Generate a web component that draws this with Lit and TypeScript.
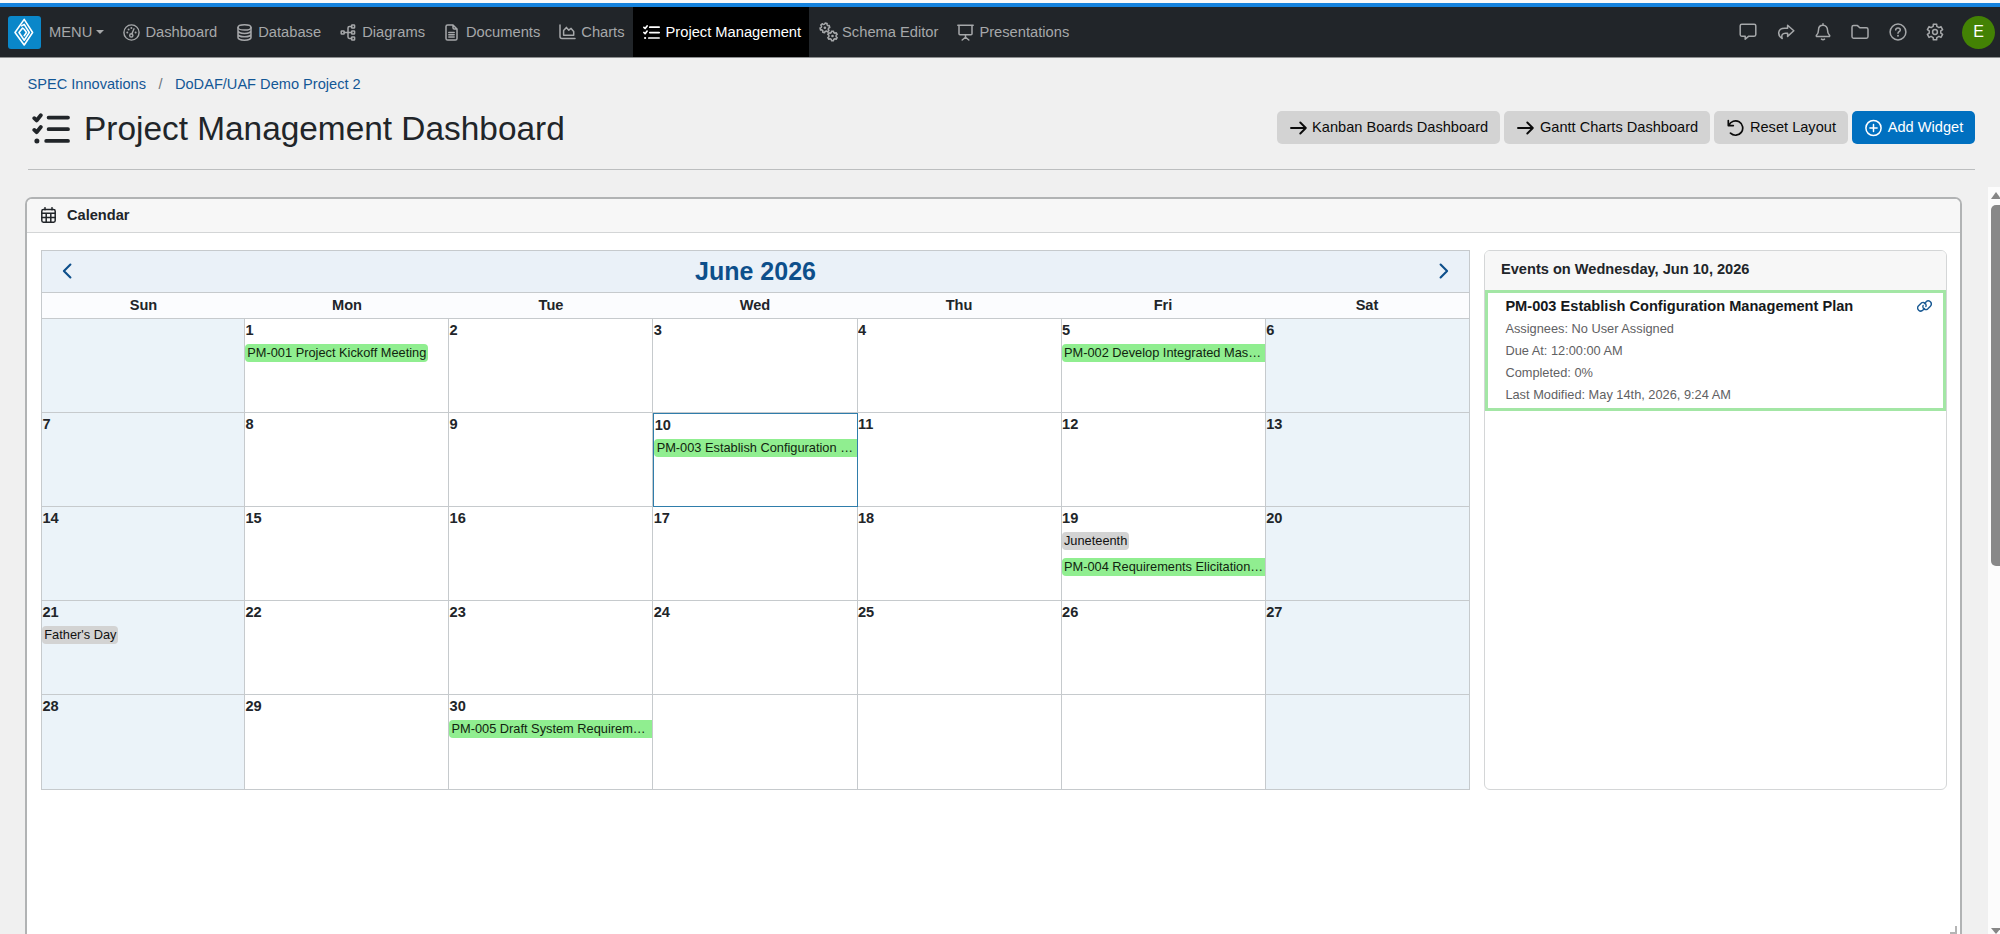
import { LitElement, html, css, svg, TemplateResult, nothing } from "lit";
import { customElement, property } from "lit/decorators.js";
import { classMap } from "lit/directives/class-map.js";

/** Outline of a toothed wheel centred on (cx, cy). */
function gearPath(cx: number, cy: number, outer: number, inner: number, teeth: number, turn = 0): string {
  const step = 360 / teeth;
  const at = (deg: number, r: number) => {
    const a = ((deg - 90 + turn) * Math.PI) / 180;
    return `${(cx + r * Math.cos(a)).toFixed(2)} ${(cy + r * Math.sin(a)).toFixed(2)}`;
  };
  const pts: string[] = [];
  for (let k = 0; k < teeth; k++) {
    const c = k * step;
    pts.push(at(c - step * 0.3, inner), at(c - step * 0.2, outer), at(c + step * 0.2, outer), at(c + step * 0.3, inner));
  }
  return `M${pts.join("L")}Z`;
}

interface Glyph {
  w: number;
  h: number;
  sw: number;
  body: TemplateResult;
}

const GLYPHS: Record<string, Glyph> = {
  gauge: { w: 17, h: 17, sw: 1.4, body: svg`
    <circle cx="8.5" cy="8.5" r="7.6"/><circle cx="8.3" cy="11.4" r="1.6"/><path d="M8.9 9.8 11 4.8"/>
    <g class="dot"><circle cx="4.3" cy="8.6" r="1"/><circle cx="5.6" cy="5.4" r="1"/><circle cx="8.4" cy="4.1" r="1"/><circle cx="12.6" cy="8.6" r="1"/></g>` },
  database: { w: 15, h: 17, sw: 1.5, body: svg`
    <ellipse cx="7.5" cy="3.4" rx="6.5" ry="2.6"/><path d="M1 3.4v10.200c0 1.400 2.900 2.600 6.500 2.600s6.500-1.200 6.500-2.600V3.400M1 6.800c0 1.400 2.900 2.600 6.500 2.600S14 8.200 14 6.800M1 10.200c0 1.400 2.900 2.600 6.500 2.600s6.500-1.200 6.500-2.600"/>` },
  diagram: { w: 16, h: 17, sw: 1.5, body: svg`
    <rect x="1.2" y="7" width="3" height="3" rx=".6"/><rect x="11.6" y="1" width="3" height="3" rx=".6"/><rect x="11.6" y="7" width="3" height="3" rx=".6"/><rect x="11.6" y="13" width="3" height="3" rx=".6"/>
    <path d="M4.2 8.5h7.4M11.6 2.5H9.4q-1.4 0-1.4 1.4v9.2q0 1.4 1.4 1.4h2.2"/>` },
  document: { w: 13, h: 17, sw: 1.5, body: svg`
    <path d="M8 1H2.6Q1 1 1 2.6v11.8Q1 16 2.6 16h7.8q1.6 0 1.6-1.6V5zM8 1v2.8Q8 5 9.2 5H12M3.8 8.4h5.4M3.8 10.8h5.4M3.8 13.1h5.4"/>` },
  area: { w: 17, h: 16, sw: 1.5, body: svg`
    <path d="M1 1v11.6Q1 14.6 3 14.6h13M4.6 11.2V6.6L7.4 3.4l2.4 2.8 2.3-1.8 2.6 3v3.8z"/>` },
  tasks: { w: 17, h: 15, sw: 1.7, body: svg`
    <path d="M6.8 2.2h9.4M6.8 7.6h9.4M5.800 13h10.400M.9 2.3l1.2 1.2L4.1.9M.9 7.5l1.2 1.2 2-2.6"/><circle class="dot" cx="2.1" cy="13" r="1.1"/>` },
  gears: { w: 19, h: 20, sw: 1.5, body: svg`
    <path d=${gearPath(5.9, 5.800, 4.900, 3.700, 6, 15)} /><circle class="dot" cx="5.9" cy="5.8" r="1.3"/>
    <path d=${gearPath(13.5, 14, 4.900, 3.700, 6)} /><circle class="dot" cx="13.5" cy="14" r="1.3"/>` },
  board: { w: 17, h: 17, sw: 1.5, body: svg`
    <path d="M.8 1.2h15.400M2 1.200v8.600q0 1 1 1h11q1 0 1-1V1.200M8.500 10.800v2.400M5.200 16l3.300-2.800 3.300 2.800"/>` },
  comment: { w: 18, h: 18, sw: 1.5, body: svg`
    <path d="M2.8 1.2h12.4q1.6 0 1.6 1.6v8.8q0 1.6-1.6 1.6H9.8l-3.6 3v-3H2.8q-1.6 0-1.6-1.6V2.8q0-1.6 1.6-1.6z"/>` },
  share: { w: 18, h: 18, sw: 1.5, body: svg`
    <path d="M10.6 2.2 16.8 7.8l-6.2 5.6v-3.1H8.4c-3 0-4.3 2-3.2 5.2C.2 12.400 .2 5.400 7.600 5.300h3z"/>` },
  bell: { w: 16, h: 18, sw: 1.5, body: svg`
    <path d="M8 .8v1.500M8 2.300c-2.900 0-4.500 2.100-4.500 4.700 0 3-.8 4-2 5.200-.5.600-.1 1.300.5 1.300h12c.6 0 1-.7.5-1.300-1.200-1.200-2-2.200-2-5.200 0-2.600-1.600-4.700-4.500-4.700zM6.500 16.100q1.500 1.200 3 0"/>` },
  folder: { w: 18, h: 16, sw: 1.5, body: svg`
    <path d="M2.600 1.600h3.900l2.300 2.200h6.600q1.600 0 1.600 1.600v7.200q0 1.600-1.600 1.600H2.600q-1.600 0-1.600-1.600V3.200q0-1.600 1.600-1.600z"/>` },
  help: { w: 18, h: 18, sw: 1.5, body: svg`
    <circle cx="9" cy="9" r="7.900"/><path d="M6.700 6.900c.1-1.400 1-2 2.300-2 1.400 0 2.300.8 2.300 2 0 1.700-2.300 1.700-2.300 3.300"/><circle class="dot" cx="9" cy="12.700" r=".95"/>` },
  gear: { w: 18, h: 18, sw: 1.5, body: svg`
    <path d=${gearPath(9, 9, 8, 5.9, 6)} /><circle cx="9" cy="9" r="2.400"/>` },
  titleTasks: { w: 38, h: 31, sw: 3.8, body: svg`
    <path d="M16.600 4.600H36M16.600 16.200H36M14.200 27.900H36"/><path d="M2.300 5.200 4.600 7.500 8.800 2.300M2.300 16.900l2.300 2.300 4.200-5.200"/><circle class="dot" cx="4.900" cy="27.900" r="2.500"/>` },
  arrow: { w: 17, h: 14, sw: 1.900, body: svg`<path d="M1 7h14.500M10.300 1.500 15.800 7l-5.500 5.500"/>` },
  reset: { w: 17, h: 18, sw: 1.700, body: svg`<path d="M1.300 1.600v5h5M1.900 6.200A7.200 7.200 0 1 1 3.500 14.200"/>` },
  plus: { w: 17, h: 18, sw: 1.500, body: svg`<circle cx="8.500" cy="9" r="7.600"/><path d="M8.500 5.400v7.200M4.900 9h7.200"/>` },
  calendar: { w: 15, h: 16, sw: 1.500, body: svg`
    <rect x=".8" y="2.600" width="13.400" height="12.600" rx="1.600"/><path d="M4 .7v2M11 .7v2M.8 6.200h13.400M.8 10.500h13.400M5.200 6.200v9M9.800 6.200v9"/>` },
  left: { w: 10, h: 16, sw: 2.100, body: svg`<path d="M8.400 1.500 1.900 8l6.500 6.500"/>` },
  right: { w: 10, h: 16, sw: 2.100, body: svg`<path d="M1.600 1.500 8.100 8l-6.500 6.500"/>` },
  link: { w: 15, h: 12, sw: 1.400, body: svg`
    <path d="M7.600 8.400 6 10.100A3.050 3.050 0 0 1 1.600 5.800L4.400 2.900A3.050 3.050 0 0 1 8.900 6.500M7.400 3.600 9 1.900A3.050 3.050 0 0 1 13.400 6.200L10.600 9.100A3.050 3.050 0 0 1 6.100 5.500"/>` },
  logo: { w: 33, h: 33, sw: 1.600, body: svg`
    <path d="M16.200 3.400 24.600 16.500 16.200 29 7 16.500z"/><path d="M13.600 9.900 16.200 8.400 21.300 16.500l-5.100 7.700-5.200-7.700 3.600-4.500 1.800 1.500M16.300 13.500l2.200 3-2.300 3.200"/>` },
};

@customElement("ui-glyph")
class UiGlyph extends LitElement {
  @property() name = "";
  static styles = css`
    :host { display: inline-flex; flex: none; }
    svg { display: block; fill: none; stroke: currentColor; stroke-linecap: round; stroke-linejoin: round; }
    .dot { fill: currentColor; stroke: none; }
  `;
  render() {
    const g = GLYPHS[this.name];
    return g
      ? html`<svg width=${g.w} height=${g.h} viewBox="0 0 ${g.w} ${g.h}" stroke-width=${g.sw}>${g.body}</svg>`
      : nothing;
  }
}

@customElement("top-nav")
class TopNav extends LitElement {
  static styles = css`
    :host { display: block; border-top: 4px solid #1583de; margin-top: 3px; background: #212529; color: #a6a8aa; border-bottom: 1px solid #8d8f90; height: 50px; font-size: 14.700px; }
    nav { display: flex; height: 50px; align-items: center; padding-left: 8px; padding-right: 5px; }
    .logo { display: flex; width: 33px; height: 33px; border-radius: 3px; background: #0a87c9; color: #fff; }
    .menu { display: flex; align-items: center; gap: 4px; width: 63.400px; padding-left: 8px; }
    .caret { border: 4px solid transparent; border-top-color: currentColor; border-bottom: 0; }
    .item { display: flex; align-items: center; height: 50px; padding: 0 8px; white-space: nowrap; }
    .item.on { background: #000; color: #fff; }
    .ico { display: flex; justify-content: center; width: 22px; margin-right: 3px; }
    .tools { display: flex; align-items: center; margin-left: auto; }
    .tool { display: flex; justify-content: center; width: 37.300px; }
    .avatar { display: flex; align-items: center; justify-content: center; width: 33px; height: 33px; margin-left: 8.400px; border-radius: 50%; background: #438204; color: #fff; font-size: 16px; }
  `;
  items = [
    ["gauge", "Dashboard"], ["database", "Database"], ["diagram", "Diagrams"], ["document", "Documents"],
    ["area", "Charts"], ["tasks", "Project Management"], ["gears", "Schema Editor"], ["board", "Presentations"],
  ];
  render() {
    return html`<nav>
      <ui-glyph class="logo" name="logo"></ui-glyph>
      <div class="menu">MENU<span class="caret"></span></div>
      ${this.items.map(([icon, label]) => html`
        <div class=${classMap({ item: true, on: label === "Project Management" })}>
          <span class="ico"><ui-glyph name=${icon}></ui-glyph></span>${label}
        </div>`)}
      <div class="tools">
        ${["comment", "share", "bell", "folder", "help", "gear"].map((n) => html`<span class="tool"><ui-glyph name=${n}></ui-glyph></span>`)}
        <span class="avatar">E</span>
      </div>
    </nav>`;
  }
}

interface Entry { title: string; kind: "task" | "holiday"; cut?: boolean; }

const ENTRIES: Record<number, Entry[]> = {
  1: [{ title: "PM-001 Project Kickoff Meeting", kind: "task" }],
  5: [{ title: "PM-002 Develop Integrated Mas…", kind: "task", cut: true }],
  10: [{ title: "PM-003 Establish Configuration …", kind: "task", cut: true }],
  19: [{ title: "Juneteenth", kind: "holiday" }, { title: "PM-004 Requirements Elicitation…", kind: "task", cut: true }],
  21: [{ title: "Father's Day", kind: "holiday" }],
  30: [{ title: "PM-005 Draft System Requirem…", kind: "task", cut: true }],
};

@customElement("month-grid")
class MonthGrid extends LitElement {
  static styles = css`
    :host { display: block; width: 1429px; flex: none; }
    .frame { border: 1px solid #c6cacd; border-bottom: 0; border-right: 0; }
    .head { display: flex; align-items: center; justify-content: space-between; height: 41px; padding: 0 20px 0 20px; background: #eaf1f8; border-bottom: 1px solid #c6cacd; border-right: 1px solid #c6cacd; color: #0d4f8b; }
    .head ui-glyph { margin-top: -1px; }
    h2 { margin: 0; font-size: 25px; font-weight: 700; line-height: 40px; height: 41px; }
    .week { display: grid; grid-template-columns: 203px repeat(6, 1fr); }
    .names { height: 25px; background: #fbfcfe; border-bottom: 1px solid #c6cacd; border-right: 1px solid #c6cacd; font-weight: 700; line-height: 25px; text-align: center; }
    .cell { box-sizing: border-box; height: 94px; min-width: 0; overflow: hidden; background: #fff; border-right: 1px solid #c6cacd; border-bottom: 1px solid #c6cacd; }
    .week:last-child .cell { height: 95px; }
    .cell.off { background: #ebf3f9; }
    .cell.sel { border: 1px solid #2f7dab; }
    .num { display: block; height: 22px; padding-left: .4px; line-height: 22px; font-weight: 700; }
    .list { display: flex; flex-direction: column; align-items: flex-start; gap: 8px; padding-top: 2.500px; }
    .chip { box-sizing: border-box; height: 18px; padding: 0 2px 0 2.300px; border-radius: 4px; overflow: hidden; white-space: nowrap; font-size: 12.800px; line-height: 18px; color: #10240f; background: #90ee90; }
    .chip.holiday { background: #d3d3d3; color: #111; }
    .chip.cut { align-self: stretch; padding-right: 0; border-radius: 4px 0 0 4px; }
  `;
  render() {
    const weeks = [0, 1, 2, 3, 4].map((w) => [0, 1, 2, 3, 4, 5, 6].map((d) => w * 7 + d));
    return html`<div class="frame">
      <div class="head"><ui-glyph name="left"></ui-glyph><h2>June 2026</h2><ui-glyph name="right"></ui-glyph></div>
      <div class="week names">${["Sun", "Mon", "Tue", "Wed", "Thu", "Fri", "Sat"].map((d) => html`<span>${d}</span>`)}</div>
      ${weeks.map((week) => html`<div class="week">${week.map((n, d) => html`
        <div class=${classMap({ cell: true, off: d === 0 || d === 6, sel: n === 10 })}>
          <span class="num">${n > 0 && n < 31 ? n : ""}</span>
          <div class="list">${(ENTRIES[n] ?? []).map((e) => html`
            <span class=${classMap({ chip: true, holiday: e.kind === "holiday", cut: !!e.cut })}>${e.title}</span>`)}</div>
        </div>`)}</div>`)}
    </div>`;
  }
}

@customElement("day-events")
class DayEvents extends LitElement {
  static styles = css`
    :host { display: block; box-sizing: border-box; width: 463px; flex: none; border: 1px solid #d4d6d7; border-radius: 6px; overflow: hidden; background: #fff; }
    .head { height: 39px; padding-left: 16px; background: #f7f7f7; font-weight: 700; line-height: 37px; }
    .card { box-sizing: border-box; height: 121px; margin: 0; padding: 2px 11px 0 17.400px; border: 3px solid #a3e6a5; }
    .top { display: flex; justify-content: space-between; align-items: center; height: 24px; font-weight: 700; color: #16191c; }
    .top ui-glyph { color: #1a5a94; margin-top: -3px; }
    .meta { height: 22px; line-height: 19px; font-size: 12.800px; color: #5f6163; }
  `;
  render() {
    return html`<div class="head">Events on Wednesday, Jun 10, 2026</div>
      <div class="card">
        <div class="top">PM-003 Establish Configuration Management Plan<ui-glyph name="link"></ui-glyph></div>
        ${["Assignees: No User Assigned", "Due At: 12:00:00 AM", "Completed: 0%", "Last Modified: May 14th, 2026, 9:24 AM"].map((t) => html`<div class="meta">${t}</div>`)}
      </div>`;
  }
}

@customElement("app-root")
class AppRoot extends LitElement {
  static styles = css`
    :host { display: flex; flex-direction: column; box-sizing: border-box; width: 100%; height: 934px; overflow: hidden; background: #f0f0f0; color: #212529; font: 14.600px/1.5 "Liberation Sans", Arial, sans-serif; }
    .strip { display: flow-root; flex: none; background: #fafafa; }
    header { flex: none; margin: 0 25px 0 28px; height: 111px; border-bottom: 1px solid #bcbebf; }
    .crumbs { display: flex; padding-top: 16px; height: 21px; margin-left: -.5px; color: #135796; }
    .sep { width: 29px; text-align: center; color: #6c757d; }
    .row { display: flex; align-items: center; height: 50px; padding-top: 8px; }
    .row > ui-glyph { margin-left: 4px; }
    h1 { margin: 1px auto 0 14px; font-size: 33.400px; font-weight: 400; line-height: 48px; }
    .buttons { display: flex; gap: 4.500px; margin-top: -1px; }
    .btn { display: flex; align-items: center; gap: 5.500px; box-sizing: border-box; height: 33px; padding: 0 11.800px 0 13px; border-radius: 5px; background: #d3d3d3; color: #0b0b0b; white-space: nowrap; }
    .btn.primary { background: #0070c0; color: #fff; }
    .scroll { display: flex; flex: 1; min-height: 0; margin-top: 17px; }
    .pane { flex: 1; min-width: 0; padding: 10px 26px 0 25px; overflow: hidden; }
    .panel { position: relative; box-sizing: border-box; height: 737px; width: 1937px; border: 2px solid #b1b3b4; border-bottom: 0; border-radius: 7px 7px 0 0; background: #fff; overflow: hidden; }
    .title { display: flex; align-items: center; gap: 11px; height: 33px; padding-left: 14px; background: #f7f7f7; border-bottom: 1px solid #d3d5d6; font-weight: 700; }
    .title ui-glyph { margin-top: -1px; }
    .content { display: flex; gap: 14px; padding: 17px 14px; height: 540px; }
    .grip { position: absolute; right: 3px; bottom: 0; width: 5px; height: 6px; border-right: 2px solid #b5b5b5; border-bottom: 2px solid #b5b5b5; }
    .bar { display: flex; flex-direction: column; width: 12px; flex: none; background: #fcfcfc; align-items: flex-end; overflow: hidden; }
    .up, .down { width: 0; height: 0; border: 5px solid transparent; margin-right: -1px; }
    .up { margin-top: 5px; border-top: 0; border-bottom: 7px solid #868686; }
    .thumb { width: 9px; height: 361px; margin-top: 6px; border-radius: 5px 0 0 5px; background: #888; }
    .down { margin-top: auto; border-bottom: 0; border-top: 6px solid #868686; }
  `;
  render() {
    return html`
      <div class="strip"><top-nav></top-nav></div>
      <header>
        <div class="crumbs"><span>SPEC Innovations</span><span class="sep">/</span><span>DoDAF/UAF Demo Project 2</span></div>
        <div class="row">
          <ui-glyph name="titleTasks"></ui-glyph>
          <h1>Project Management Dashboard</h1>
          <div class="buttons">
            <div class="btn"><ui-glyph name="arrow"></ui-glyph>Kanban Boards Dashboard</div>
            <div class="btn"><ui-glyph name="arrow"></ui-glyph>Gantt Charts Dashboard</div>
            <div class="btn"><ui-glyph name="reset"></ui-glyph>Reset Layout</div>
            <div class="btn primary"><ui-glyph name="plus"></ui-glyph>Add Widget</div>
          </div>
        </div>
      </header>
      <div class="scroll">
        <div class="pane">
          <div class="panel">
            <div class="title"><ui-glyph name="calendar"></ui-glyph>Calendar</div>
            <div class="content"><month-grid></month-grid><day-events></day-events></div>
            <div class="grip"></div>
          </div>
        </div>
        <div class="bar"><div class="up"></div><div class="thumb"></div><div class="down"></div></div>
      </div>`;
  }
}
